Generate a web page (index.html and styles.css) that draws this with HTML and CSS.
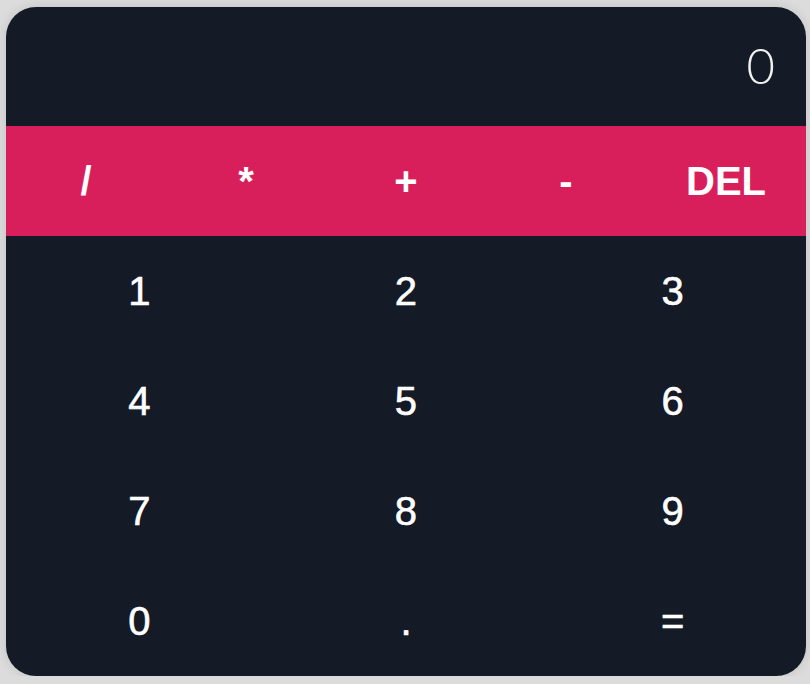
FILE: index.html
```html
<!DOCTYPE html>
<html lang="en">
<head>
    <meta charset="UTF-8">
    <meta name="viewport" content="width=device-width, initial-scale=1.0">
    <title>Calculator</title>
    <link rel="stylesheet" href="styles.css">
</head>
<body>
    <div class="calculator">
        <div class="display"><span id="result">0</span></div>
        <div class="operators">
            <button>/</button>
            <button>*</button>
            <button>+</button>
            <button>-</button>
            <button>DEL</button>
        </div>
        <div class="digits">
            <button>1</button>
            <button>2</button>
            <button>3</button>
            <button>4</button>
            <button>5</button>
            <button>6</button>
            <button>7</button>
            <button>8</button>
            <button>9</button>
            <button>0</button>
            <button>.</button>
            <button>=</button>
        </div>
    </div>
</body>
</html>
```
FILE: styles.css
```css
* {
    box-sizing: border-box;
}
body {
    margin: 0;
    padding: 7px 0 0 6px;
    background: #dcdcdc;
    font-family: "Liberation Sans", Arial, sans-serif;
}
.calculator {
    width: 800px;
    background: #141a26;
    border-radius: 30px;
    overflow: hidden;
    box-shadow: 0px 0px 12px rgba(0, 0, 0, 0.12);
}
.display {
    height: 119px;
    display: flex;
    align-items: center;
    justify-content: flex-end;
    padding: 0 31px 4px 0;
    color: #f2f2f2;
    font-family: Lato, "Liberation Sans", sans-serif;
    font-weight: 300;
    font-size: 49px;
}
.operators {
    display: flex;
    background: #d81f5b;
}
.operators button {
    flex: 1;
    height: 110px;
    font-weight: bold;
    font-size: 40px;
}
.digits {
    display: grid;
    grid-template-columns: repeat(3, 1fr);
}
.digits button {
    height: 110px;
    font-size: 40px;
    -webkit-text-stroke: 0.6px white;
}
button {
    background: transparent;
    border: none;
    color: white;
    font-family: inherit;
    cursor: pointer;
    padding: 0;
}
```
